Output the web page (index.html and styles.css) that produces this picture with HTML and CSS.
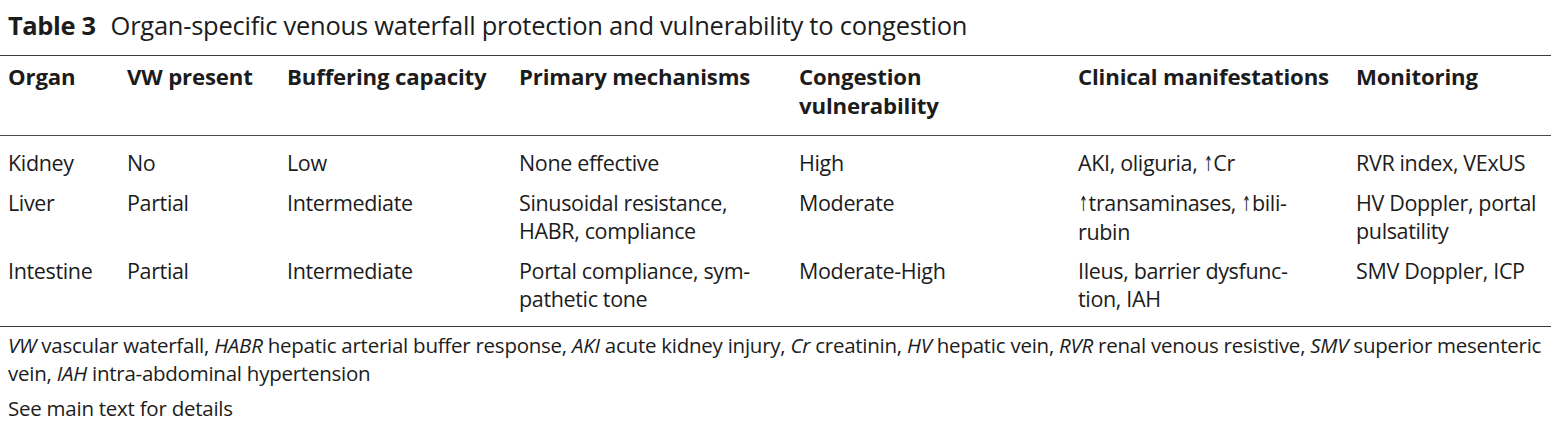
FILE: index.html
```html
<!DOCTYPE html>
<html lang="en">
<head>
<meta charset="utf-8">
<title>Table 3</title>
<link rel="stylesheet" href="styles.css">
</head>
<body>
<div class="page">
  <h1 class="caption"><span class="label">Table 3</span><span class="title">Organ-specific venous waterfall protection and vulnerability to congestion</span></h1>
  <div class="frame">
    <table class="data">
      <colgroup>
        <col class="c1"><col class="c2"><col class="c3"><col class="c4"><col class="c5"><col class="c6"><col class="c7">
      </colgroup>
      <thead>
        <tr>
          <th>Organ</th>
          <th>VW present</th>
          <th>Buffering capacity</th>
          <th>Primary mechanisms</th>
          <th>Congestion<br>vulnerability</th>
          <th>Clinical manifestations</th>
          <th>Monitoring</th>
        </tr>
      </thead>
      <tbody>
        <tr class="first">
          <td>Kidney</td>
          <td>No</td>
          <td>Low</td>
          <td>None effective</td>
          <td>High</td>
          <td>AKI, oliguria, <span class="arr">↑</span>Cr</td>
          <td>RVR index, VExUS</td>
        </tr>
        <tr>
          <td>Liver</td>
          <td>Partial</td>
          <td>Intermediate</td>
          <td>Sinusoidal resistance,<br>HABR, compliance</td>
          <td>Moderate</td>
          <td><span class="arr">↑</span>transaminases, <span class="arr">↑</span>bili-<br>rubin</td>
          <td>HV Doppler, portal<br>pulsatility</td>
        </tr>
        <tr class="last">
          <td>Intestine</td>
          <td>Partial</td>
          <td>Intermediate</td>
          <td>Portal compliance, sym-<br>pathetic tone</td>
          <td>Moderate-High</td>
          <td>Ileus, barrier dysfunc-<br>tion, IAH</td>
          <td>SMV Doppler, ICP</td>
        </tr>
      </tbody>
    </table>
  </div>
  <p class="note"><i>VW</i> vascular waterfall, <i>HABR</i> hepatic arterial buffer response, <i>AKI</i> acute kidney injury, <i>Cr</i> creatinin, <i>HV</i> hepatic vein, <i>RVR</i> renal venous resistive, <i>SMV</i> superior mesenteric<br>vein, <i>IAH</i> intra-abdominal hypertension</p>
  <p class="note second">See main text for details</p>
</div>
</body>
</html>
```
FILE: styles.css
```css
html, body {
  margin: 0;
  padding: 0;
  background: #ffffff;
}

body {
  font-family: "Open Sans", "Noto Sans", "DejaVu Sans", sans-serif;
  color: #1c1c1c;
}

.page {
  width: 1551px;
  padding-top: 9px;
}

.caption {
  margin: 0 0 14px 0;
  padding-left: 8px;
  font-size: 25.5px;
  line-height: 32px;
  font-weight: 400;
  letter-spacing: -0.25px;
  display: flex;
  gap: 15px;
}

.caption .label {
  font-weight: 700;
  letter-spacing: -0.4px;
}

.frame {
  border-top: 1.5px solid #3a3a3a;
  border-bottom: 1.5px solid #3a3a3a;
}

.data {
  width: 100%;
  border-collapse: collapse;
  table-layout: fixed;
}

.c1 { width: 119px; }
.c2 { width: 160px; }
.c3 { width: 232px; }
.c4 { width: 280px; }
.c5 { width: 279px; }
.c6 { width: 278px; }
.c7 { width: auto; }

.data th {
  text-align: left;
  vertical-align: top;
  font-weight: 700;
  font-size: 22.2px;
  line-height: 29px;
  letter-spacing: -0.15px;
  padding: 6px 2px 15px 8px;
  border-bottom: 1.5px solid #4a4a4a;
  white-space: nowrap;
}

.data td {
  text-align: left;
  vertical-align: top;
  font-size: 21.5px;
  line-height: 28px;
  letter-spacing: -0.35px;
  padding: 5px 2px 6px 8px;
  white-space: nowrap;
}

.data tr.first td {
  padding-top: 13px;
}

.data tr.last td {
  padding-bottom: 13px;
}

.arr {
  display: inline-block;
  font-family: "DejaVu Sans", sans-serif;
  font-size: 21px;
  letter-spacing: 0;
  transform: scaleX(0.5);
  transform-origin: left center;
  margin-right: -8px;
  margin-left: 1px;
}

.note {
  margin: 0;
  padding: 4px 0 0 8px;
  font-size: 20.5px;
  line-height: 28px;
  letter-spacing: -0.25px;
}

.note.second {
  padding-top: 7px;
}
```
